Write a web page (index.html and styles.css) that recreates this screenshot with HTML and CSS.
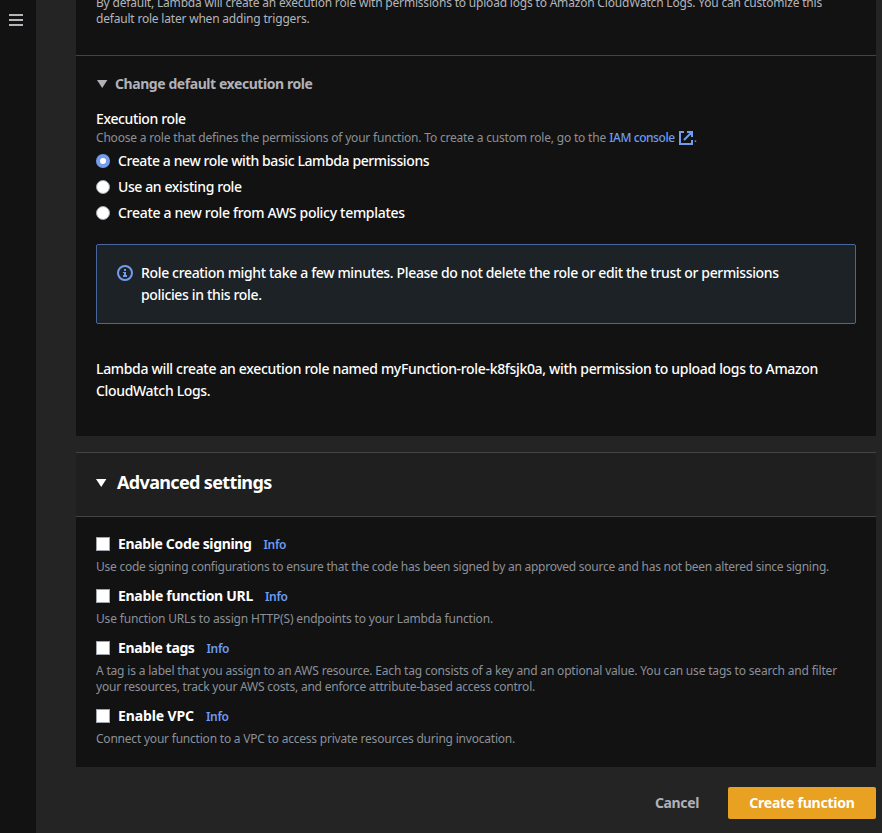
FILE: index.html
```
<!DOCTYPE html>
<html lang="en">
<head>
<meta charset="utf-8">
<title>Create function</title>
<link rel="stylesheet" href="styles.css">
</head>
<body>
<div class="app">
  <aside class="sidebar">
    <button class="menu" aria-label="Open navigation"><span></span><span></span><span></span></button>
  </aside>
  <main class="content">
    <section class="panel">
      <p class="intro"><span class="t1">By default, Lambda will create an execution role with permissions to upload logs to Amazon CloudWatch Logs. You can customize this</span><br><span class="t2">default role later when adding triggers.</span></p>
      <div class="role">
        <h3 class="expander"><svg class="caret" viewBox="0 0 10 8"><path d="M0 0h10.4L5.2 8z"/></svg><span>Change default execution role</span></h3>
        <div class="label">Execution role</div>
        <p class="hint"><span class="t3">Choose a role that defines the permissions of your function. To create a custom role, go to the</span> <a class="link">IAM console<svg class="external" viewBox="0 0 14 14"><path d="M5 1H1v12h12V9M8 1h5v5M13 1L5 9"/></svg></a>.</p>
        <label class="option o1"><i class="radio on"></i><span>Create a new role with basic Lambda permissions</span></label>
        <label class="option o2"><i class="radio"></i><span>Use an existing role</span></label>
        <label class="option o3"><i class="radio"></i><span>Create a new role from AWS policy templates</span></label>
        <div class="alert">
          <svg class="info-icon" viewBox="0 0 16 16"><circle cx="8" cy="8" r="7"/><path d="M7 4h2v2H7zM6 7h3v3h1v2H6v-2h1V8H6z"/></svg>
          <p>Role creation might take a few minutes. Please do not delete the role or edit the trust or permissions<br>policies in this role.</p>
        </div>
        <p class="summary">Lambda will create an execution role named myFunction-role-k8fsjk0a, with permission to upload logs to Amazon<br>CloudWatch Logs.</p>
      </div>
    </section>
    <section class="panel advanced">
      <h2 class="header"><svg class="caret" viewBox="0 0 10 8"><path d="M0 0h10.4L5.2 8z"/></svg><span>Advanced settings</span></h2>
      <div class="settings">
        <div class="setting">
          <label class="option"><i class="check"></i><b class="b1">Enable Code signing</b><a class="info">Info</a></label>
          <p class="hint d1">Use code signing configurations to ensure that the code has been signed by an approved source and has not been altered since signing.</p>
        </div>
        <div class="setting">
          <label class="option"><i class="check"></i><b class="b2">Enable function URL</b><a class="info">Info</a></label>
          <p class="hint d2">Use function URLs to assign HTTP(S) endpoints to your Lambda function.</p>
        </div>
        <div class="setting">
          <label class="option"><i class="check"></i><b class="b3">Enable tags</b><a class="info">Info</a></label>
          <p class="hint d3">A tag is a label that you assign to an AWS resource. Each tag consists of a key and an optional value. You can use tags to search and filter<br><span class="d4">your resources, track your AWS costs, and enforce attribute-based access control.</span></p>
        </div>
        <div class="setting">
          <label class="option"><i class="check"></i><b class="b4">Enable VPC</b><a class="info">Info</a></label>
          <p class="hint d5">Connect your function to a VPC to access private resources during invocation.</p>
        </div>
      </div>
    </section>
    <div class="actions">
      <button class="cancel">Cancel</button>
      <button class="primary">Create function</button>
    </div>
  </main>
</div>
</body>
</html>
```
FILE: styles.css
```
* { box-sizing: border-box; }
html, body { margin: 0; height: 100%; overflow: hidden; }
body {
  background: #242424;
  color: #fff;
  font: 500 14px/22px "Noto Sans", "Open Sans", sans-serif;
}
p, h2, h3 { margin: 0; }
p, span, b { white-space: nowrap; }
button { border: 0; padding: 0; background: none; font: inherit; }

.app { display: flex; height: 833px; }
.sidebar { width: 36px; flex: none; background: #121212; padding: 14px 0 0 9px; }
.menu { display: flex; flex-direction: column; gap: 3px; width: 14px; }
.menu span { height: 2px; background: #b4b4bb; }
.content { width: 800px; margin-left: 40px; flex: none; }

.panel { background: #121212; display: flow-root; }
.intro {
  height: 60px;
  margin-top: -5px;
  padding-left: 20px;
  color: #b2b5bc;
  font-size: 12px;
  font-weight: 400;
  line-height: 16px;
}
.t1 { letter-spacing: -0.189px; }
.t2 { letter-spacing: -0.199px; }
.role { border-top: 1px solid #444; padding: 17px 20px 0; height: 381px; }
.caret { flex: none; width: 10px; height: 8px; fill: currentColor; overflow: visible; }
.expander {
  display: flex;
  align-items: center;
  gap: 8px;
  padding-left: 1px;
  font-size: 14px;
  color: #b1b1b8;
  letter-spacing: -0.431px;
}
.label { margin-top: 13px; letter-spacing: -0.37px; }
.hint { color: #8c9099; font-size: 12px; font-weight: 400; line-height: 16px; }
.t3 { letter-spacing: -0.193px; }
.link { color: #6d9bf0; font-weight: 500; letter-spacing: -0.43px; }
.external {
  width: 14px;
  height: 14px;
  margin: -5px 1px -3px 4px;
  vertical-align: 0;
  fill: none;
  stroke: #739cec;
  stroke-width: 2;
}
.option { display: flex; align-items: center; height: 22px; }
.role .option { margin-top: 4px; }
.o1 { letter-spacing: -0.4px; }
.o2 { letter-spacing: -0.39px; }
.o3 { letter-spacing: -0.3px; }
.radio { width: 14px; height: 14px; margin-right: 8px; border-radius: 50%; background: #fff; border: 1px solid #9fa5ad; }
.radio.on { border: 4.5px solid #739cec; }
.alert {
  display: flex;
  gap: 8px;
  margin-top: 20px;
  height: 80px;
  padding: 17px 20px;
  background: #1c2226;
  border: 1px solid #4a66a0;
  border-radius: 2px;
  letter-spacing: -0.348px;
}
.info-icon { flex: none; width: 16px; height: 16px; margin-top: 3px; fill: #739cec; }
.info-icon circle { fill: none; stroke: #739cec; stroke-width: 2; }
.summary { margin-top: 34px; letter-spacing: -0.327px; }

.advanced { margin-top: 16px; height: 315px; border-top: 1px solid #444; }
.header {
  display: flex;
  align-items: center;
  gap: 6px;
  height: 64px;
  padding: 0 20px 6px;
  background: #1f1f1f;
  border-bottom: 1px solid #444;
  font-size: 18px;
  line-height: 22px;
  letter-spacing: -0.65px;
}
.header .caret { margin-top: 3px; margin-right: 5px; }
.settings { padding: 16px 20px; display: flex; flex-direction: column; gap: 10px; }
.setting .hint { margin-top: 4px; }
.check { width: 14px; height: 14px; margin-right: 8px; background: #fff; border: 1px solid #9fa5ad; }
b { font-weight: 700; }
.b1 { letter-spacing: -0.354px; }
.b2 { letter-spacing: -0.291px; }
.b3 { letter-spacing: -0.38px; }
.b4 { letter-spacing: -0.113px; }
.info { margin: 2px 0 0 12px; color: #6d9bf0; font-size: 12px; font-weight: 600; letter-spacing: -0.35px; }
.d1 { letter-spacing: -0.248px; }
.d2 { letter-spacing: -0.168px; }
.d3 { letter-spacing: -0.182px; }
.d4 { letter-spacing: -0.221px; }
.d5 { letter-spacing: -0.214px; }

.actions { display: flex; justify-content: flex-end; margin-top: 20px; }
.actions button { height: 32px; font-weight: 700; }
.cancel { color: #b1b1b8; margin-right: 29px; letter-spacing: -0.371px; }
.primary { width: 148px; color: #fff; background: #e9a122; border-radius: 2px; letter-spacing: -0.216px; }
```
